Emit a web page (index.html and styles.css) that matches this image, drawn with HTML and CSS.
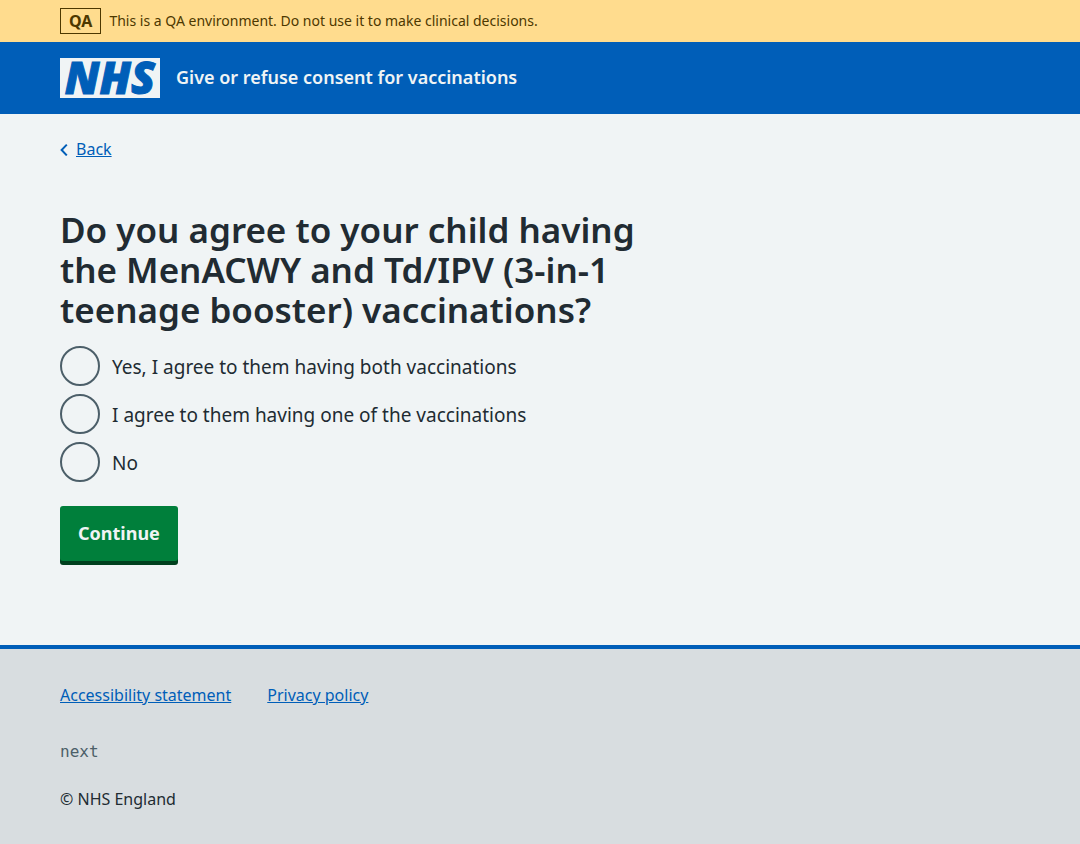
FILE: index.html
```html
<!DOCTYPE html>
<html lang="en">
<head>
<meta charset="utf-8">
<meta name="viewport" content="width=device-width, initial-scale=1">
<title>Give or refuse consent for vaccinations</title>
<link rel="stylesheet" href="styles.css">
</head>
<body>
<div class="environment">
  <div class="container environment-inner">
    <strong class="environment-tag">QA</strong>
    <span>This is a QA environment. Do not use it to make clinical decisions.</span>
  </div>
</div>
<header class="header">
  <div class="container header-inner">
    <span class="logo">NHS</span>
    <span class="service-name">Give or refuse consent for vaccinations</span>
  </div>
</header>
<div class="container page">
  <a class="back-link" href="#">
    <svg class="back-icon" viewBox="0 0 8 14" width="8" height="14" aria-hidden="true"><path d="M6.8 2.6 1.6 8l5.2 5.4"/></svg>
    <span class="back-text">Back</span>
  </a>
  <main class="main">
    <form class="form">
      <fieldset class="fieldset">
        <legend class="legend"><h1 class="heading">Do you agree to your child having the MenACWY and Td/IPV (3-in-1 teenage booster) vaccinations?</h1></legend>
        <div class="radios">
          <div class="radio"><input class="radio-input" type="radio" name="response" id="response-both"><label class="radio-label" for="response-both">Yes, I agree to them having both vaccinations</label></div>
          <div class="radio"><input class="radio-input" type="radio" name="response" id="response-one"><label class="radio-label" for="response-one">I agree to them having one of the vaccinations</label></div>
          <div class="radio"><input class="radio-input" type="radio" name="response" id="response-no"><label class="radio-label" for="response-no">No</label></div>
        </div>
      </fieldset>
      <button class="button" type="submit">Continue</button>
    </form>
  </main>
</div>
<footer class="footer">
  <div class="container footer-inner">
    <nav class="footer-links" aria-label="Footer">
      <a class="footer-link" href="#">Accessibility statement</a>
      <a class="footer-link" href="#">Privacy policy</a>
    </nav>
    <p class="version">next</p>
    <p class="copyright">© NHS England</p>
  </div>
</footer>
</body>
</html>
```
FILE: styles.css
```css
*, *::before, *::after { box-sizing: border-box; }

body {
  margin: 0;
  min-height: 100vh;
  display: flex;
  flex-direction: column;
  background: #f0f4f5;
  color: #212b32;
  font: 16px/24px "Noto Sans", "Open Sans", Arial, sans-serif;
}

.container {
  width: 100%;
  max-width: 1024px;
  margin: 0 auto;
  padding: 0 32px;
}

.environment {
  background: #ffdc8e;
  color: #4d3800;
  font-size: 14px;
}

.environment-inner {
  display: flex;
  align-items: center;
  gap: 8px;
  padding-top: 8px;
  padding-bottom: 8px;
}

.environment-tag {
  border: 1px solid currentColor;
  padding: 0 8px;
  font-size: 16px;
  font-weight: 700;
}

.header { background: #005eb8; color: #f0f4f5; }

.header-inner {
  display: flex;
  align-items: center;
  gap: 16px;
  padding-top: 16px;
  padding-bottom: 16px;
}

.logo {
  flex: none;
  width: 100px;
  height: 40px;
  background: #f0f4f5;
  color: #005eb8;
  font: italic 800 44px/38px "Open Sans", "Noto Sans", sans-serif;
  -webkit-text-stroke: 1px #005eb8;
  text-align: center;
}

.service-name { font-size: 18px; line-height: 24px; font-weight: 600; padding-bottom: 2px; }

.page { flex: 1 0 auto; padding-top: 23px; }

.back-link {
  display: inline-flex;
  align-items: center;
  gap: 8px;
  color: #005eb8;
  text-decoration: none;
}
.back-text { text-decoration: underline; }
.back-icon { fill: none; stroke: currentColor; stroke-width: 2; }

.main { padding: 48px 0 80px; }

.form { max-width: 624px; }

.fieldset { margin: 0 0 24px; padding: 0; border: 0; min-width: 0; }
.legend { padding: 0; margin-bottom: 16px; }
.heading { margin: 0; font-size: 35px; line-height: 40px; font-weight: 600; max-width: 590px; }

.radios { display: grid; gap: 8px; }
.radio { display: flex; align-items: center; gap: 12px; }
.radio-input {
  appearance: none;
  flex: none;
  width: 40px;
  height: 40px;
  margin: 0;
  border: 2px solid #4c5f69;
  border-radius: 50%;
  cursor: pointer;
}
.radio-input:checked { background: radial-gradient(#212b32 10px, transparent 11px); }
.radio-label { padding-top: 2px; font-size: 19px; line-height: 28px; cursor: pointer; }

.button {
  display: block;
  padding: 13px 18px 14px;
  margin-bottom: 4px;
  border: 0;
  border-radius: 3px;
  background: #007f3b;
  box-shadow: 0 4px 0 #00401e;
  color: #f0f4f5;
  font: 700 18px/28px "Noto Sans", "Open Sans", Arial, sans-serif;
  cursor: pointer;
}

.footer { background: #d8dde0; border-top: 4px solid #005eb8; }
.footer-inner { padding-top: 34px; padding-bottom: 33px; }
.footer-links { display: flex; flex-wrap: wrap; gap: 8px 36px; margin-bottom: 33px; }
.footer-link { color: #005eb8; }
.version {
  margin: 0 0 23px;
  color: #4c5f69;
  font-family: "DejaVu Sans Mono", monospace;
}
.copyright { margin: 0; }
```
